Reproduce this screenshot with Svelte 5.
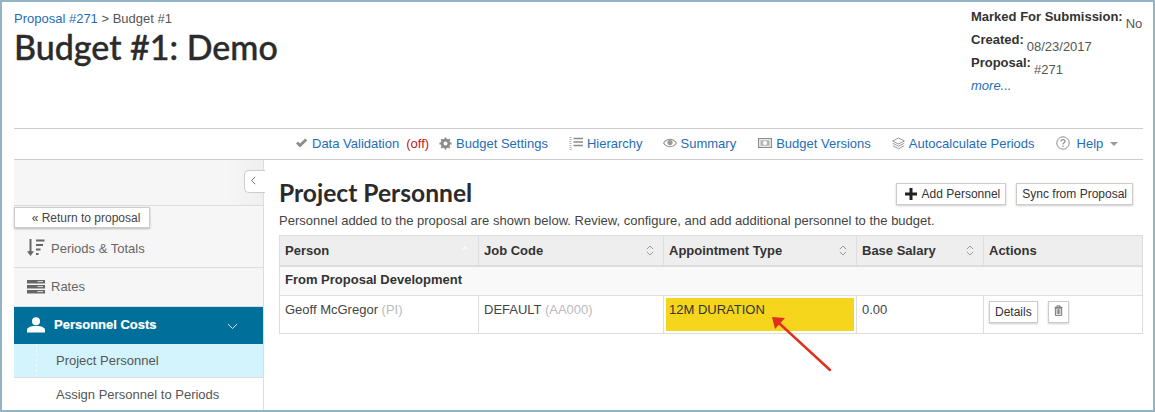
<script>
  const sortCols = [
    { label: 'Person', cls: 'c1', asc: true },
    { label: 'Job Code', cls: 'c2' },
    { label: 'Appointment Type', cls: 'c3' },
    { label: 'Base Salary', cls: 'c4' }
  ];
</script>

<div class="frame">
  <header class="top">
    <div class="titles">
      <div class="crumbs"><a href="#top">Proposal #271</a> &gt; Budget #1</div>
      <h1>Budget #1: Demo</h1>
    </div>
    <dl class="meta">
      <div class="meta-row"><dt>Marked For Submission:</dt><dd>No</dd></div>
      <div class="meta-row"><dt>Created:</dt><dd>08/23/2017</dd></div>
      <div class="meta-row"><dt>Proposal:</dt><dd>#271</dd></div>
      <a class="more" href="#top">more...</a>
    </dl>
  </header>

  <nav class="toolbar">
    <span class="tool">
      <svg width="13" height="12" viewBox="0 0 13 12"><path d="M1 6.5 L3 4.6 L5 6.6 L10.2 1.6 L12.2 3.5 L5 10.4 Z" fill="#8c8c8c"/></svg>
      <a href="#top">Data Validation</a><span class="off">(off)</span>
    </span>
    <span class="tool t-settings">
      <svg width="13" height="13" viewBox="0 0 13 13"><circle cx="6.5" cy="6.5" r="3.6" fill="none" stroke="#8c8c8c" stroke-width="2.4"/><path d="M6.5 0.4V12.6M0.4 6.5H12.6M2.2 2.2L10.8 10.8M10.8 2.2L2.2 10.8" stroke="#8c8c8c" stroke-width="1.8"/><circle cx="6.5" cy="6.5" r="1.9" fill="#fff"/></svg>
      <a href="#top">Budget Settings</a>
    </span>
    <span class="tool t-hier">
      <svg width="14" height="13" viewBox="0 0 14 13"><path d="M4.5 1.5H14M4.5 5H14M4.5 8.5H14" stroke="#8c8c8c" stroke-width="1.4"/><path d="M0.5 0.5H2.5M0.5 2.5H2.5M0.5 4.5H2.5M0.5 6.5H2.5M0.5 8.5H2.5M0.5 10.5H2.5M0.5 12.5H2.5" stroke="#aaa" stroke-width="0.9"/></svg>
      <a href="#top">Hierarchy</a>
    </span>
    <span class="tool t-summary">
      <svg width="14" height="10" viewBox="0 0 14 10"><path d="M0.6 5C3.6 0.2 10.4 0.2 13.4 5C10.4 9.8 3.6 9.8 0.6 5Z" fill="none" stroke="#999" stroke-width="1.1"/><circle cx="7" cy="4.6" r="2.6" fill="#999"/></svg>
      <a href="#top">Summary</a>
    </span>
    <span class="tool t-versions">
      <svg width="14" height="10" viewBox="0 0 14 10"><rect x="0.6" y="0.6" width="12.8" height="8.8" fill="none" stroke="#8c8c8c" stroke-width="1.2"/><rect x="2.4" y="2.2" width="9.2" height="5.6" fill="#b5b5b5"/><circle cx="7" cy="5" r="2" fill="#fff"/></svg>
      <a href="#top">Budget Versions</a>
    </span>
    <span class="tool t-auto">
      <svg width="13" height="13" viewBox="0 0 13 13"><path d="M6.5 1L12.4 4L6.5 7L0.6 4Z" fill="none" stroke="#999" stroke-width="1"/><path d="M0.8 6.3L6.5 9.2L12.2 6.3M0.8 8.8L6.5 11.7L12.2 8.8" fill="none" stroke="#999" stroke-width="1"/></svg>
      <a href="#top">Autocalculate Periods</a>
    </span>
    <span class="tool t-help">
      <svg width="14" height="14" viewBox="0 0 14 14"><circle cx="7" cy="7" r="6.2" fill="none" stroke="#8c8c8c" stroke-width="1"/><path d="M5 5.5C5 3 9 3 9 5.4C9 6.9 7 6.8 7 8.4" fill="none" stroke="#8c8c8c" stroke-width="1.2"/><circle cx="7" cy="10.2" r="0.8" fill="#8c8c8c"/></svg>
      <a class="help-link" href="#top">Help</a><span class="caret"></span>
    </span>
  </nav>

  <div class="body">
    <aside class="side">
      <div class="side-top">
        <button class="collapse" aria-label="Collapse">
          <svg width="7" height="9" viewBox="0 0 7 9"><path d="M5.2 0.8L1.6 4.5L5.2 8.2" fill="none" stroke="#777" stroke-width="1"/></svg>
        </button>
      </div>
      <button class="return">« Return to proposal</button>
      <div class="item periods">
        <svg width="18" height="18" viewBox="0 0 18 18"><path d="M3.5 0V14" stroke="#666" stroke-width="2"/><path d="M0 12.2H7L3.5 17Z" fill="#666"/><path d="M9 1.5H17.5" stroke="#666" stroke-width="2"/><path d="M9 6H16" stroke="#666" stroke-width="2"/><path d="M9 10.5H13.5" stroke="#666" stroke-width="2"/><path d="M9 15H11.5" stroke="#666" stroke-width="2"/></svg>
        <span>Periods &amp; Totals</span>
      </div>
      <div class="item rates">
        <svg width="18" height="14" viewBox="0 0 18 14"><path d="M0 0H18V3.6H0ZM0 5H18V8.6H0ZM0 10H18V13.6H0Z" fill="#666"/><path d="M10.5 1.6H16M10.5 6.6H16M10.5 11.6H16" stroke="#fff" stroke-width="0.8"/></svg>
        <span>Rates</span>
      </div>
      <div class="item active">
        <svg width="18" height="16" viewBox="0 0 18 16"><circle cx="9" cy="4.2" r="4" fill="#fff"/><path d="M0 15.5V13C0 10.5 3.5 9 9 9C14.5 9 18 10.5 18 13V15.5Z" fill="#fff"/></svg>
        <strong>Personnel Costs</strong>
        <svg class="chev" width="11" height="7" viewBox="0 0 11 7"><path d="M1 1L5.5 5.6L10 1" fill="none" stroke="#cfe6ef" stroke-width="1"/></svg>
      </div>
      <div class="sub current">Project Personnel</div>
      <div class="sub">Assign Personnel to Periods</div>
    </aside>

    <main class="main">
      <div class="main-head">
        <h2>Project Personnel</h2>
        <div class="actions">
          <button class="btn add">
            <svg width="12" height="12" viewBox="0 0 12 12"><path d="M6 0V12M0 6H12" stroke="#222" stroke-width="3"/></svg>
            Add Personnel
          </button>
          <button class="btn">Sync from Proposal</button>
        </div>
      </div>
      <p class="desc">Personnel added to the proposal are shown below. Review, configure, and add additional personnel to the budget.</p>

      <table>
        <thead>
          <tr>
            {#each sortCols as col}
              <th class={col.cls}>
                <div class="th-in">
                  {col.label}
                  <svg width="8" height="11" viewBox="0 0 8 11">
                    <path d="M0.8 4.2L4 1L7.2 4.2" fill={col.asc ? '#f8f8f8' : 'none'} stroke={col.asc ? '#f8f8f8' : '#999'} stroke-width="1"/>
                    {#if !col.asc}<path d="M0.8 6.8L4 10L7.2 6.8" fill="none" stroke="#999" stroke-width="1"/>{/if}
                  </svg>
                </div>
              </th>
            {/each}
            <th>Actions</th>
          </tr>
        </thead>
        <tbody>
          <tr class="group"><td colspan="5">From Proposal Development</td></tr>
          <tr class="data">
            <td>Geoff McGregor <span class="mute">(PI)</span></td>
            <td>DEFAULT <span class="mute">(AA000)</span></td>
            <td class="hl-cell"><div class="hl">12M DURATION</div></td>
            <td>0.00</td>
            <td class="act">
              <div class="act-in">
                <button class="btn small">Details</button>
                <button class="btn trash" aria-label="Delete">
                  <svg width="9" height="11" viewBox="0 0 10 12"><path d="M0.5 2.5H9.5M3.4 2.2V0.8H6.6V2.2" fill="none" stroke="#666" stroke-width="1"/><path d="M1.5 3.4H8.5V11.4H1.5Z" fill="none" stroke="#666" stroke-width="1"/><path d="M3.5 4.5V10M5 4.5V10M6.5 4.5V10" stroke="#666" stroke-width="0.9"/></svg>
                </button>
              </div>
            </td>
          </tr>
        </tbody>
      </table>
    </main>
  </div>

  <svg class="arrow" width="70" height="64" viewBox="0 0 70 64">
    <path d="M62 59L12 13" stroke="#e0301e" stroke-width="2.4" stroke-linecap="round"/>
    <path d="M4 6L17 7L7 18Z" fill="#e0301e"/>
  </svg>
</div>

<style>
  :global(body) {
    margin: 0;
    background: #fff;
  }
  .frame {
    position: relative;
    box-sizing: border-box;
    width: 1155px;
    height: 412px;
    overflow: hidden;
    border: 2px solid #93b4c4;
    padding: 0 10px 0 12px;
    font-family: "Liberation Sans", Arial, sans-serif;
    font-size: 13px;
    color: #444;
    background: #fff;
  }
  a {
    color: #1f6db5;
    text-decoration: none;
  }
  button {
    font-family: inherit;
  }
  .top {
    display: flex;
    justify-content: space-between;
    box-sizing: border-box;
    height: 127px;
    border-bottom: 1px solid #ccc;
  }
  .crumbs {
    margin-top: 9px;
    font-size: 13px;
    line-height: 15px;
    color: #555;
  }
  h1 {
    margin: 2px 0 0;
    font-family: Lato, sans-serif;
    font-size: 34px;
    line-height: 38px;
    font-weight: 500;
    color: #2b2b2b;
    -webkit-text-stroke: 0.4px #2b2b2b;
  }
  .meta {
    width: 172px;
    margin: 7px 0 0;
    font-size: 13px;
    white-space: nowrap;
  }
  .meta-row {
    display: flex;
    gap: 3px;
    height: 23px;
  }
  dt {
    font-weight: bold;
    color: #333;
    line-height: 16px;
  }
  dd {
    margin: 6px 0 0;
    line-height: 17px;
    color: #555;
  }
  .more {
    display: block;
    font-style: italic;
    line-height: 16px;
  }
  .toolbar {
    display: flex;
    align-items: center;
    box-sizing: border-box;
    height: 31px;
    padding: 0 0 2px 281px;
    border-bottom: 1px solid #ccc;
    white-space: nowrap;
  }
  .tool {
    display: inline-flex;
    align-items: center;
    gap: 4px;
    font-size: 13px;
  }
  .off {
    margin-left: 3px;
    color: #c8171d;
  }
  .t-settings { margin-left: 10px; }
  .t-hier { margin-left: 21px; }
  .t-summary { margin-left: 20px; }
  .t-versions { margin-left: 22px; }
  .t-auto { margin-left: 21px; }
  .t-help { margin-left: 21px; }
  .help-link { margin-left: 3px; }
  .caret {
    margin: 2px 0 0 3px;
    border: 4px solid transparent;
    border-top-color: #999;
    border-bottom: 0;
  }
  .body {
    display: flex;
    height: 250px;
  }
  .side {
    position: relative;
    flex: 0 0 249px;
    border-right: 1px solid #ddd;
    color: #666;
  }
  .side-top {
    height: 46px;
    box-sizing: border-box;
    border-bottom: 1px solid #ddd;
    background: linear-gradient(to right, #f6f6f6 85%, #efefef);
  }
  .collapse {
    position: absolute;
    top: 10px;
    right: -2px;
    width: 21px;
    height: 23px;
    padding: 0 4px 3px 0;
    border: 1px solid #ccc;
    border-right: 0;
    border-radius: 5px 0 0 5px;
    background: #fff;
    display: flex;
    align-items: center;
    justify-content: center;
  }
  .return {
    position: absolute;
    top: 47px;
    left: 0;
    width: 136px;
    height: 21px;
    padding: 0 0 0 8px;
    border: 1px solid #ccc;
    background: #fff;
    box-shadow: 0 1px 2px rgba(0, 0, 0, 0.25);
    font-size: 12px;
    color: #444;
    z-index: 1;
  }
  .item {
    display: flex;
    align-items: center;
    gap: 6px;
    box-sizing: border-box;
    padding-left: 13px;
    background: #f6f6f6;
    border-bottom: 1px solid #ddd;
  }
  .periods {
    height: 62px;
    padding-top: 23px;
  }
  .rates {
    height: 39px;
    padding-bottom: 1px;
  }
  .active {
    position: relative;
    height: 37px;
    gap: 9px;
    padding-bottom: 2px;
    background: #00709a;
    border-bottom: 0;
    color: #fff;
  }
  .active strong {
    -webkit-text-stroke: 0.2px #fff;
  }
  .chev {
    position: absolute;
    right: 25px;
    top: 16px;
  }
  .sub {
    box-sizing: border-box;
    height: 34px;
    padding-left: 42px;
    line-height: 33px;
    color: #555;
    border-bottom: 1px solid #ddd;
  }
  .current {
    background: repeating-linear-gradient(to bottom, #ecfaff 0 3px, transparent 3px 5px) 22px 0 / 1px 100% no-repeat, #d3f3fd;
  }
  .main {
    flex: 1;
    padding: 0 0 0 15px;
    min-width: 0;
  }
  .main-head {
    display: flex;
    justify-content: space-between;
    align-items: flex-start;
  }
  h2 {
    margin: 18px 0 0;
    font-family: Lato, sans-serif;
    font-size: 24.6px;
    line-height: 29px;
    font-weight: 700;
    color: #2b2b2b;
  }
  .actions {
    display: flex;
    gap: 10px;
    margin: 23px 10px 0 0;
  }
  .btn {
    display: inline-flex;
    align-items: center;
    gap: 4px;
    height: 22px;
    padding: 0 5px;
    border: 1px solid #ccc;
    background: #fff;
    box-shadow: 0 1px 2px rgba(0, 0, 0, 0.2);
    font-size: 12px;
    color: #333;
  }
  .add {
    gap: 5px;
    padding-left: 8px;
  }
  .desc {
    margin: 6px 0 0;
    font-size: 13px;
    line-height: 16px;
    color: #444;
  }
  table {
    width: 864px;
    margin-top: 6px;
    border-collapse: collapse;
    table-layout: fixed;
    font-size: 13px;
  }
  .c1 { width: 199px; }
  .c2 { width: 185px; }
  .c3 { width: 193px; }
  .c4 { width: 127px; }
  th, td {
    border: 1px solid #ddd;
    box-sizing: border-box;
    text-align: left;
    padding: 0 5px;
  }
  th {
    height: 30px;
    background: #eee;
    border-bottom: 2px solid #ddd;
    font-weight: bold;
    color: #333;
  }
  .th-in {
    display: flex;
    justify-content: space-between;
    align-items: center;
    padding-right: 4px;
  }
  .group td {
    height: 30px;
    padding-bottom: 2px;
    background: #f9f9f9;
    font-weight: bold;
    color: #333;
  }
  .data td {
    height: 38px;
    padding-top: 5px;
    padding-bottom: 15px;
    line-height: 16px;
    color: #444;
  }
  .mute {
    color: #bbb;
  }
  .data .hl-cell {
    padding: 2px;
  }
  .hl {
    height: 33px;
    padding: 4px 0 0 3px;
    box-sizing: border-box;
    background: #f5d61d;
    color: #333;
  }
  .data .act {
    padding: 5px 5px 0;
    vertical-align: top;
  }
  .act-in {
    display: flex;
    gap: 10px;
  }
  .small {
    height: 22px;
    padding: 0 5px;
  }
  .trash {
    width: 21px;
    height: 22px;
    padding: 0 0 3px;
    justify-content: center;
  }
  .arrow {
    position: absolute;
    left: 766px;
    top: 309px;
  }
</style>
